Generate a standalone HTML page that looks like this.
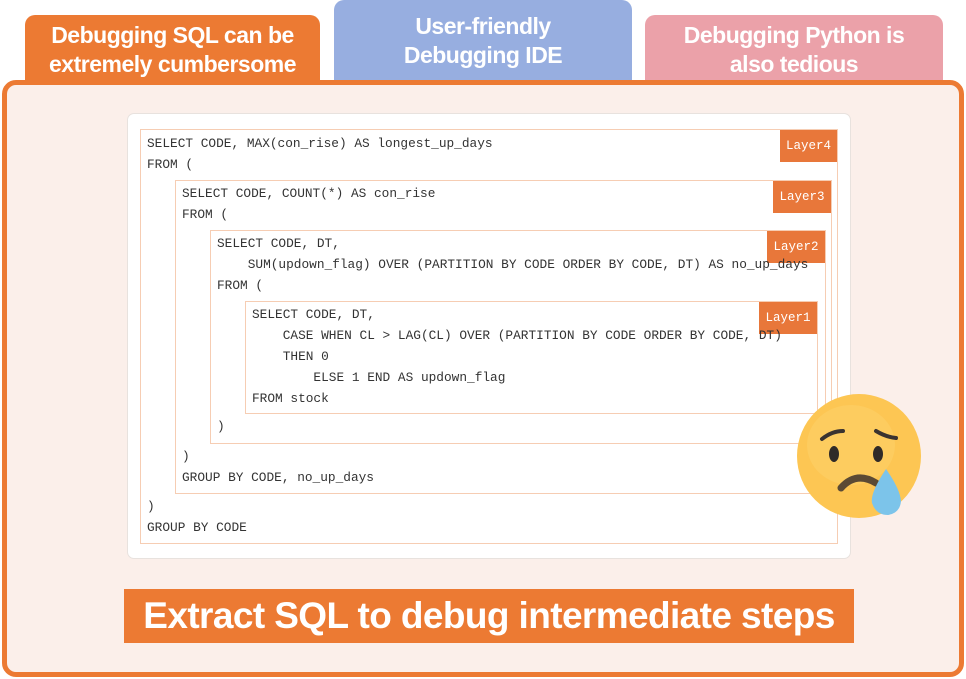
<!DOCTYPE html>
<html><head><meta charset="utf-8"><style>
*{margin:0;padding:0;box-sizing:border-box}
body{width:966px;height:679px;background:#fff;position:relative;overflow:hidden;font-family:"Liberation Sans",sans-serif}
.tab{position:absolute;color:#fff;font-weight:bold;font-size:23px;line-height:29px;text-align:center;border-radius:10px 10px 0 0;letter-spacing:-0.5px}
.main{position:absolute;left:2px;top:80px;width:962px;height:597px;border:5px solid #ec7a33;border-radius:14px;background:#fbefea}
.card{position:absolute;left:127px;top:113px;width:724px;height:446px;background:#fff;border:1px solid #e8e2de;border-radius:7px}
.box{position:absolute;border:1.5px solid #f6cdb3}
.lab{position:absolute;background:#e8773a;color:#fff;font-family:"Liberation Mono",monospace;font-size:12.5px;line-height:32px;text-align:center}
.l{position:absolute;font-family:"Liberation Mono",monospace;font-size:12.8px;color:#333;white-space:pre;line-height:16px}
.ban{position:absolute;left:124px;top:589px;width:730px;height:54px;background:#ec7a33;color:#fff;font-weight:bold;font-size:37px;line-height:54px;text-align:center;letter-spacing:-0.6px}
</style></head><body>
<div class="tab" style="left:25px;top:15px;width:295px;height:70px;background:#ec7a33;padding-top:6px">Debugging SQL can be<br>extremely cumbersome</div>
<div class="tab" style="left:334px;top:0;width:298px;height:85px;background:#97aee0;padding-top:12px">User-friendly<br>Debugging IDE</div>
<div class="tab" style="left:645px;top:15px;width:298px;height:70px;background:#eba1a9;padding-top:6px">Debugging Python is<br>also tedious</div>
<div class="main"></div>
<div class="card"></div>
<div class="box" style="left:140px;top:129px;width:698px;height:415px"></div>
<div class="box" style="left:175px;top:180px;width:657px;height:314px"></div>
<div class="box" style="left:210px;top:230px;width:616px;height:214px"></div>
<div class="box" style="left:245px;top:301px;width:573px;height:113px"></div>
<div class="lab" style="left:780px;top:130px;width:57px">Layer4</div>
<div class="lab" style="left:773px;top:181px;width:58px">Layer3</div>
<div class="lab" style="left:767px;top:231px;width:58px">Layer2</div>
<div class="lab" style="left:759px;top:302px;width:58px">Layer1</div>
<div class="l" style="left:147px;top:136px">SELECT CODE, MAX(con_rise) AS longest_up_days</div>
<div class="l" style="left:147px;top:157px">FROM (</div>
<div class="l" style="left:182px;top:186px">SELECT CODE, COUNT(*) AS con_rise</div>
<div class="l" style="left:182px;top:207px">FROM (</div>
<div class="l" style="left:217px;top:236px">SELECT CODE, DT,</div>
<div class="l" style="left:217px;top:257px">    SUM(updown_flag) OVER (PARTITION BY CODE ORDER BY CODE, DT) AS no_up_days</div>
<div class="l" style="left:217px;top:278px">FROM (</div>
<div class="l" style="left:252px;top:307px">SELECT CODE, DT,</div>
<div class="l" style="left:252px;top:328px">    CASE WHEN CL &gt; LAG(CL) OVER (PARTITION BY CODE ORDER BY CODE, DT)</div>
<div class="l" style="left:252px;top:349px">    THEN 0</div>
<div class="l" style="left:252px;top:370px">        ELSE 1 END AS updown_flag</div>
<div class="l" style="left:252px;top:391px">FROM stock</div>
<div class="l" style="left:217px;top:419px">)</div>
<div class="l" style="left:182px;top:449px">)</div>
<div class="l" style="left:182px;top:470px">GROUP BY CODE, no_up_days</div>
<div class="l" style="left:147px;top:499px">)</div>
<div class="l" style="left:147px;top:520px">GROUP BY CODE</div>
<svg style="position:absolute;left:796px;top:393px" width="126" height="126" viewBox="0 0 126 126">
<circle cx="63" cy="63" r="62" fill="#fdc653"/>
<ellipse cx="55" cy="52" rx="44" ry="40" fill="#fdd067" opacity=".6"/>
<path d="M26 46 Q36 38 47 38" stroke="#3a3330" stroke-width="4" fill="none" stroke-linecap="round"/>
<path d="M80 38 Q90 44 100 45" stroke="#3a3330" stroke-width="4" fill="none" stroke-linecap="round"/>
<ellipse cx="38" cy="61" rx="5" ry="8" fill="#2f2a28"/>
<ellipse cx="82" cy="61" rx="5" ry="8" fill="#2f2a28"/>
<path d="M45 95 Q60 78 80 90" stroke="#5b4a34" stroke-width="7" fill="none" stroke-linecap="round"/>
<path d="M90 76 Q74 100 76 110 Q80 122 92 122 Q104 120 105 108 Q104 96 90 76Z" fill="#7cc4ea"/>
</svg>
<div class="ban">Extract SQL to debug intermediate steps</div>
</body></html>
